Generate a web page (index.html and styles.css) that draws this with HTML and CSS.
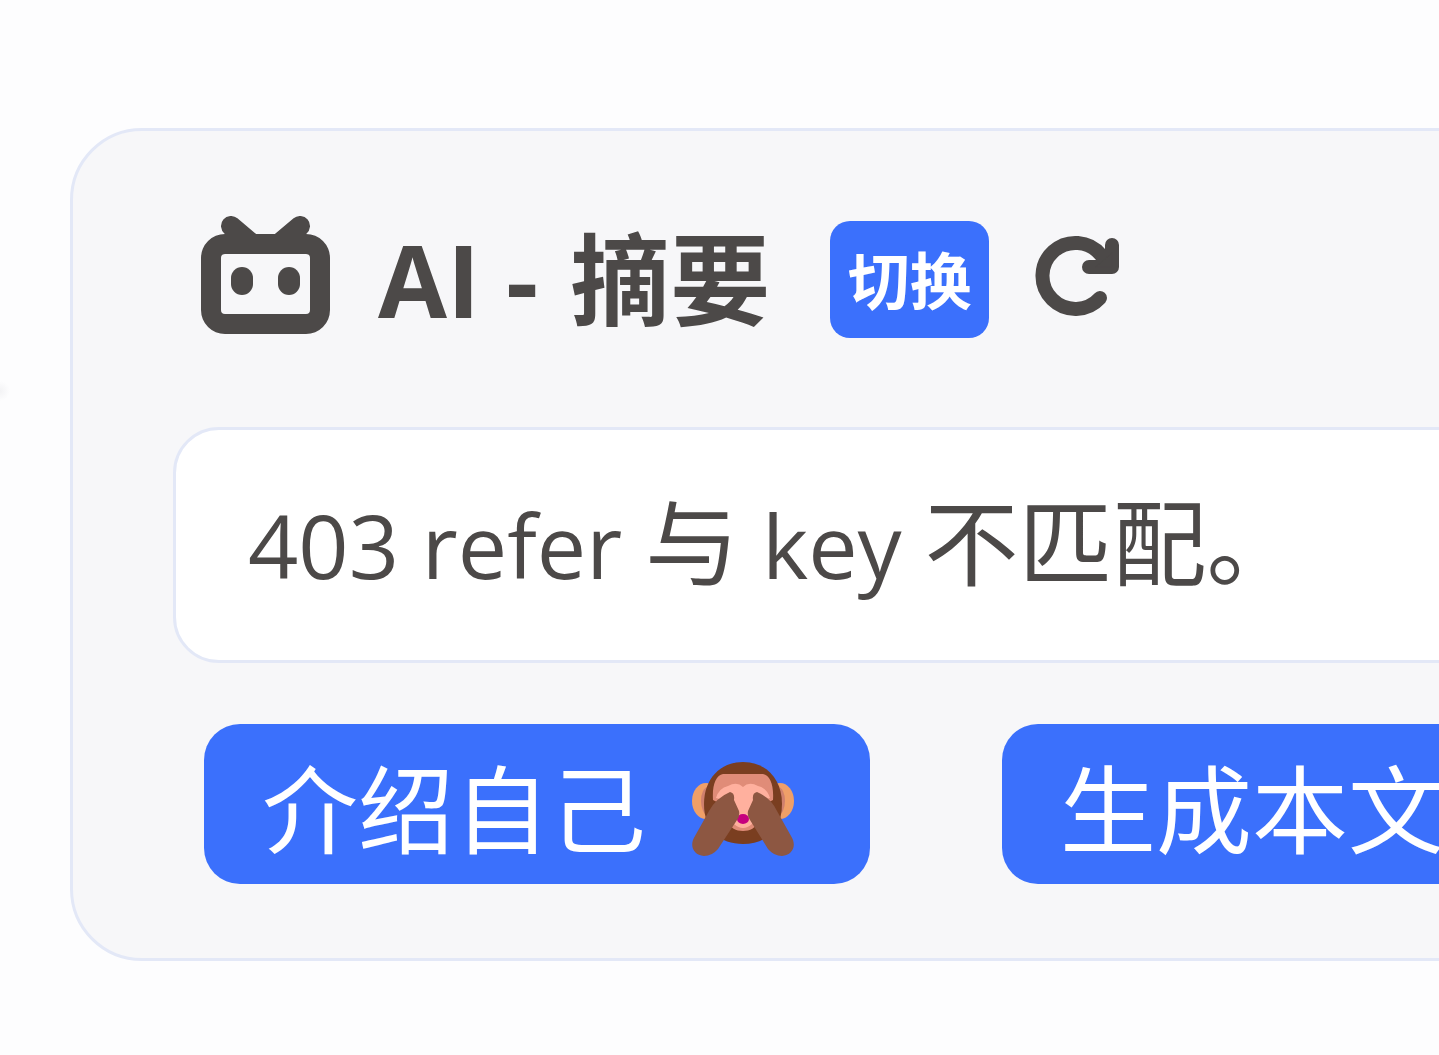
FILE: index.html
```html
<!DOCTYPE html>
<html lang="zh-CN">
<head>
<meta charset="utf-8">
<meta name="viewport" content="width=device-width, initial-scale=1">
<title>AI - 摘要</title>
<link rel="stylesheet" href="styles.css">
</head>
<body>
<main class="page">
  <section class="card">
    <header class="card-header">
      <svg class="bot-icon" viewBox="0 0 132 120" aria-hidden="true">
        <path class="bot-antenna" d="M31 10 50 26M100 10 81 26"/>
        <path class="bot-fill" fill-rule="evenodd" d="M25 18H106A24 24 0 0 1 130 42V94A24 24 0 0 1 106 118H25A24 24 0 0 1 1 94V42A24 24 0 0 1 25 18ZM25 38Q21 38 21 42V94Q21 98 25 98H106Q110 98 110 94V42Q110 38 106 38Z"/>
        <rect class="bot-fill" x="31" y="51" width="22" height="28" rx="11"/>
        <rect class="bot-fill" x="78" y="51" width="22" height="28" rx="11"/>
      </svg>
      <h2 class="title">AI - <span class="title-han">摘要</span></h2>
      <button class="switch" type="button">切换</button>
      <button class="refresh" type="button" aria-label="刷新">
        <svg class="refresh-icon" viewBox="0 0 86 84" aria-hidden="true">
          <path class="refresh-arc" d="M65 61A33 33 0 1 1 66 18L71 24"/>
          <path class="refresh-head" d="M77 8V30H54"/>
          <path class="refresh-fill" d="M77 16V30H61Z"/>
        </svg>
      </button>
    </header>
    <p class="message">403 refer <span class="han">与</span> key <span class="han">不匹配。</span></p>
    <div class="actions">
      <button class="action" type="button">介绍自己
        <svg class="monkey" viewBox="0 0 102 94" aria-hidden="true">
          <ellipse cx="14" cy="39" rx="14" ry="18" fill="#ef9f68"/>
          <ellipse cx="88" cy="39" rx="14" ry="18" fill="#ef9f68"/>
          <ellipse cx="16" cy="39" rx="7" ry="14" fill="#cf806d"/>
          <ellipse cx="86" cy="39" rx="7" ry="14" fill="#cf806d"/>
          <path fill="#7a3e20" d="M51 0C74 0 90 17 90 42 90 68 74 82 51 82S12 68 12 42C12 17 28 0 51 0Z"/>
          <path fill="#e08c78" d="M31 12H71C78 13 82 23 81 38L71 43 66 59C64 66 58 69 51 69S38 66 36 59L31 43 21 38C20 23 24 13 31 12Z"/>
          <path fill="#ffb09e" d="M24 36Q27 26 36 24 45 19 51 25 57 19 66 24 75 26 78 36L66 39 60 62Q51 70 42 62L36 39Z"/>
          <ellipse cx="51" cy="57" rx="6" ry="5" fill="#c6007e"/>
          <path fill="#8d5742" d="M38 30Q43 31 42 38L47 49Q48 54 45 58L26 87Q20 94 12 94C1 93-3 83 3 74L17 49Q24 36 38 30Z"/>
          <path fill="#8d5742" d="M65 30Q60 31 61 38L56 49Q55 54 58 58L76 87Q82 94 90 94C101 93 105 83 99 74L85 49Q79 36 65 30Z"/>
        </svg>
      </button>
      <button class="action" type="button">生成本文</button>
    </div>
  </section>
</main>
</body>
</html>
```
FILE: styles.css
```css
:root {
  --ink: #4c4948;
  --blue: #3b70fc;
  --line: #e3e8f7;
}

* {
  box-sizing: border-box;
}

body {
  margin: 0;
  overflow-x: hidden;
  background: radial-gradient(circle at 0 391px, #f3f3f5, #fdfdfe 10px);
  color: var(--ink);
  font-family: "Open Sans", "Noto Sans CJK SC", sans-serif;
}

button {
  flex: none;
  border: 0;
  font-family: inherit;
  cursor: pointer;
}

.page {
  padding: 128px 0 92px 70px;
  overflow: hidden;
}

/* The card runs on past the right edge of the window. */
.card {
  margin-right: -160px;
  padding: 85px 100px 74px;
  border: 3px solid var(--line);
  border-radius: 72px;
  background: #f7f7f9;
}

.card-header {
  display: flex;
  align-items: center;
  height: 126px;
  padding-left: 27px;
}

.bot-icon {
  flex: none;
  align-self: flex-start;
  width: 132px;
  height: 120px;
}

.bot-fill {
  fill: var(--ink);
}

.bot-antenna {
  stroke: var(--ink);
  stroke-width: 20;
  stroke-linecap: round;
}

.title {
  flex: none;
  margin: 0 60px 0 46px;
  font-size: 100px;
  line-height: 120px;
  white-space: nowrap;
}

.title-han {
  margin-left: 6px;
}

.switch {
  width: 159px;
  height: 117px;
  margin-right: 46px;
  padding: 4px 0 0;
  border-radius: 20px;
  background: var(--blue);
  color: #fff;
  font-size: 62px;
  font-weight: 700;
  line-height: 113px;
}

.refresh {
  padding: 0;
  background: none;
}

.refresh-icon {
  display: block;
  width: 86px;
  height: 84px;
  overflow: visible;
  fill: none;
  stroke: var(--ink);
  stroke-linecap: round;
  stroke-linejoin: round;
}

.refresh-arc,
.refresh-head {
  stroke-width: 14;
}

.refresh-fill {
  fill: var(--ink);
}

.message {
  margin: 85px 0 61px;
  padding: 55px 72px;
  border: 3px solid var(--line);
  border-radius: 46px;
  background: #fff;
  font-size: 88px;
  line-height: 120px;
  white-space: nowrap;
}

.han {
  font-size: 94px;
  line-height: 1;
}

.actions {
  display: flex;
  gap: 132px;
  padding-left: 31px;
}

.action {
  display: flex;
  align-items: center;
  gap: 46px;
  height: 160px;
  padding: 10px 76px 0 58px;
  border-radius: 36px;
  background: var(--blue);
  color: #fff;
  font-size: 96px;
  line-height: 150px;
  white-space: nowrap;
}

.monkey {
  width: 102px;
  height: 94px;
}
```
